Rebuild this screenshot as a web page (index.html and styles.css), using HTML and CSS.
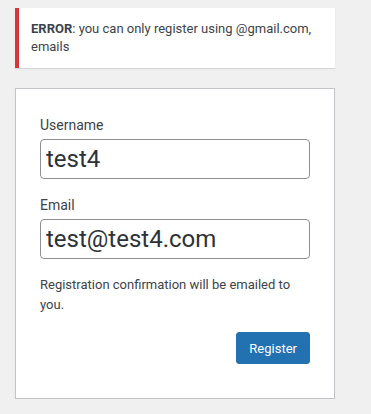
FILE: index.html
```html
<!DOCTYPE html>
<html lang="en">
<head>
<meta charset="utf-8">
<title>Registration Form</title>
<link rel="stylesheet" href="styles.css">
</head>
<body class="login">
<div class="login-wrap">
  <div class="notice notice-error">
    <strong>ERROR</strong>: you can only register using @gmail.com, emails
  </div>
  <form class="register-form">
    <p class="field">
      <label class="field-label" for="user_login">Username</label>
      <input class="input" type="text" id="user_login" value="test4">
    </p>
    <p class="field">
      <label class="field-label" for="user_email">Email</label>
      <input class="input" type="text" id="user_email" value="test@test4.com">
    </p>
    <p class="passmail">Registration confirmation will be emailed to you.</p>
    <p class="submit">
      <button class="button-primary" type="button">Register</button>
    </p>
  </form>
</div>
</body>
</html>
```
FILE: styles.css
```css
html, body {
  margin: 0;
  padding: 0;
}
body.login {
  background: #f0f0f1;
  font-family: Roboto, "Noto Sans", "Liberation Sans", sans-serif;
  font-size: 13px;
  color: #3c434a;
  padding: 8px 0 0 15px;
}
.login-wrap {
  width: 320px;
}
.notice {
  background: #fff;
  border-left: 4px solid #72aee6;
  padding: 12px;
  margin: 0 0 20px 0;
  box-shadow: 0 1px 1px 0 rgba(0,0,0,.1);
  line-height: 18px;
}
.notice-error {
  border-left-color: #d63638;
}
.notice strong {
  font-weight: 700;
}
.register-form {
  background: #fff;
  border: 1px solid #c3c4c7;
  box-shadow: 0 1px 3px rgba(0,0,0,.04);
  padding: 26px 24px 34px;
  margin: 0;
}
.field {
  margin: 0;
  display: flex;
  flex-direction: column;
}
.field-label {
  font-size: 14px;
  line-height: 1.5;
  margin-bottom: 3px;
}
.input {
  box-sizing: border-box;
  font-family: inherit;
  font-size: 24px;
  line-height: 1.33333333;
  width: 100%;
  height: 40px;
  border: 1px solid #8c8f94;
  border-radius: 4px;
  padding: 3px 5px;
  margin: 0 0 16px 0;
  color: #2c3338;
  background: #fff;
  outline: none;
}
.passmail {
  margin: 0 0 18px 0;
  line-height: 1.5;
}
.submit {
  margin: 0;
  display: flex;
  justify-content: flex-end;
}
.button-primary {
  font-family: inherit;
  font-size: 13px;
  height: 32px;
  padding: 0 12px;
  background: #2271b1;
  border: 1px solid #2271b1;
  border-radius: 3px;
  color: #fff;
  cursor: pointer;
}
```
